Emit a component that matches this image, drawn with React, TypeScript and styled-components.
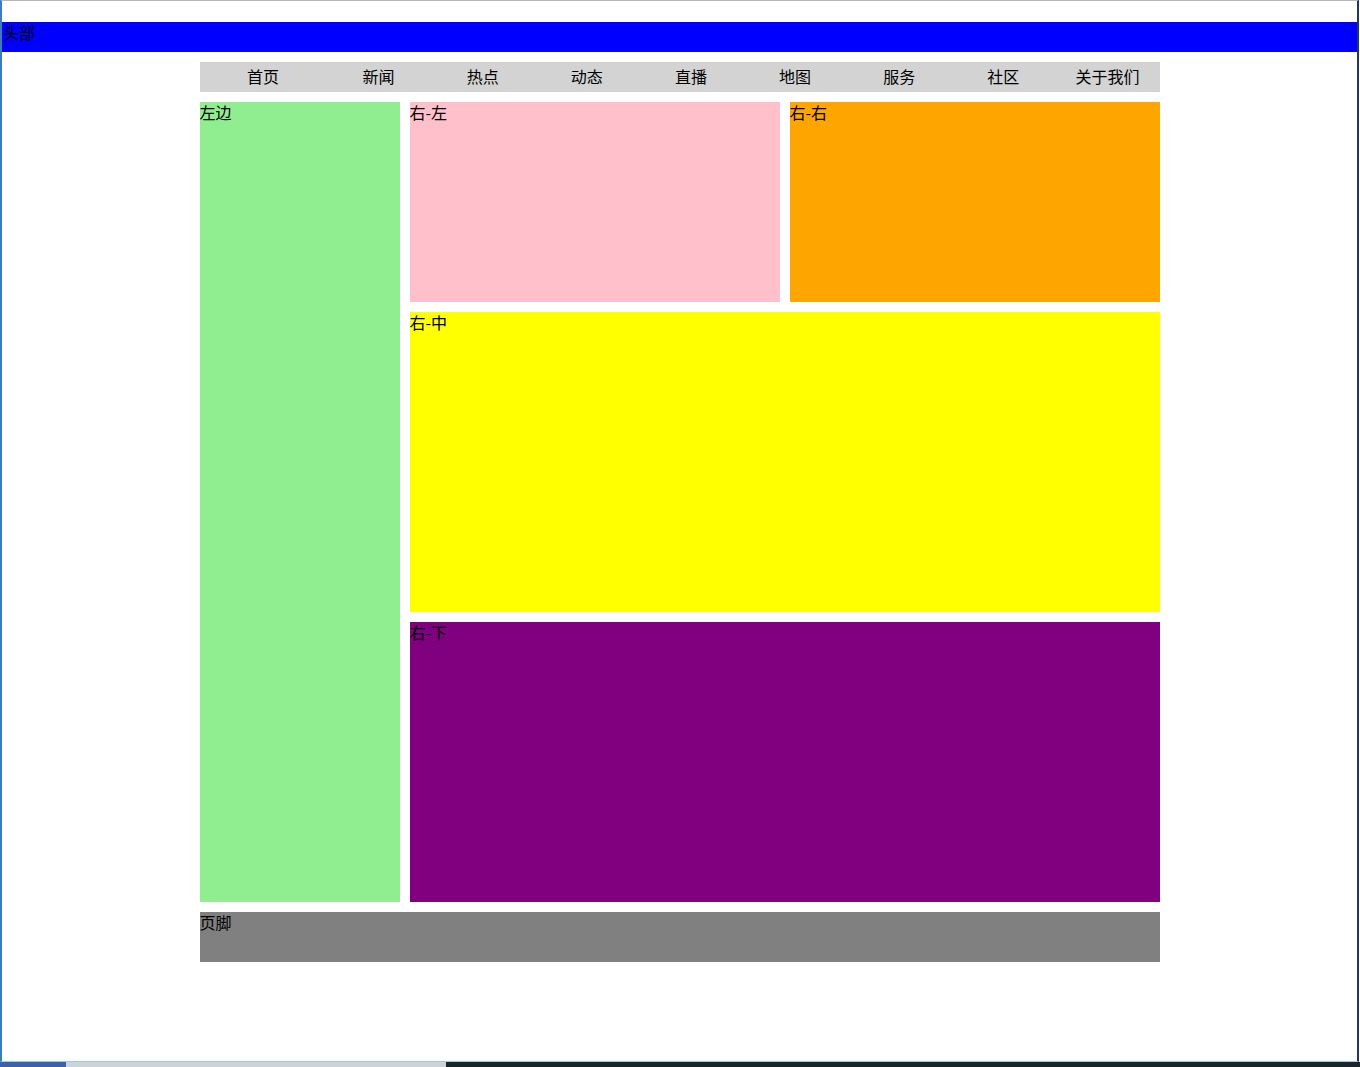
import React from "react";
import styled, { createGlobalStyle } from "styled-components";

const GlobalStyle = createGlobalStyle`
  html, body {
    margin: 0;
    padding: 0;
    background: #ffffff;
  }
  body {
    font-family: "Noto Sans CJK SC", "Noto Sans", sans-serif;
    font-size: 16px;
    color: #000;
  }
`;

const Screen = styled.div`
  width: 1360px;
  height: 1067px;
  display: flex;
  flex-direction: column;
  overflow: hidden;
  background: #ffffff;
`;

const Frame = styled.div`
  width: 1359px;
  height: 1062px;
  box-sizing: border-box;
  border-top: 1px solid #b6b6b6;
  border-left: 2px solid #3a7cc2;
  border-right: 2px solid #223a57;
  border-bottom: 1px solid #86d4ea;
  padding-top: 21px;
  background: #ffffff;
`;

const Taskbar = styled.div`
  flex: 1;
  display: grid;
  grid-template-columns: 66px 380px 1fr;
`;

const TaskSeg = styled.div<{ $bg: string }>`
  background: ${(p) => p.$bg};
`;

const Header = styled.header`
  height: 30px;
  background: #0000ff;
  line-height: 21px;
  padding-left: 1px;
`;

const Container = styled.div`
  width: 960px;
  margin: 10px auto 0;
  display: flex;
  flex-direction: column;
  gap: 10px;
`;

const Nav = styled.ul`
  list-style: none;
  margin: 0;
  padding: 0;
  height: 30px;
  background: #d3d3d3;
  display: grid;
  grid-template-columns: 127px repeat(8, 1fr);
`;

const NavItem = styled.li`
  line-height: 29px;
  text-align: center;
  white-space: nowrap;
`;

const Main = styled.div`
  display: flex;
  gap: 10px;
  height: 800px;
`;

const Block = styled.div<{ $bg: string; $h?: number }>`
  background: ${(p) => p.$bg};
  line-height: 21px;
  ${(p) => (p.$h ? `height: ${p.$h}px;` : "")}
`;

const Left = styled(Block)`
  width: 200px;
  flex-shrink: 0;
`;

const Right = styled.div`
  flex: 1;
  display: flex;
  flex-direction: column;
  gap: 10px;
`;

const TopRow = styled.div`
  display: grid;
  grid-template-columns: 1fr 1fr;
  gap: 10px;
  height: 200px;
`;

const Footer = styled(Block)`
  height: 50px;
`;

const navItems = ["首页", "新闻", "热点", "动态", "直播", "地图", "服务", "社区", "关于我们"];

export default function App() {
  return (
    <>
      <GlobalStyle />
      <Screen>
        <Frame>
          <Header>头部</Header>
          <Container>
            <Nav>
              {navItems.map((n) => (
                <NavItem key={n}>{n}</NavItem>
              ))}
            </Nav>
            <Main>
              <Left $bg="#90ee90">左边</Left>
              <Right>
                <TopRow>
                  <Block $bg="#ffc0cb">右-左</Block>
                  <Block $bg="#ffa500">右-右</Block>
                </TopRow>
                <Block $bg="#ffff00" $h={300}>右-中</Block>
                <Block $bg="#800080" $h={280}>右-下</Block>
              </Right>
            </Main>
            <Footer $bg="#808080">页脚</Footer>
          </Container>
        </Frame>
        <Taskbar>
          <TaskSeg $bg="#3d60a8" />
          <TaskSeg $bg="#cfd3d6" />
          <TaskSeg $bg="#1e2328" />
        </Taskbar>
      </Screen>
    </>
  );
}
